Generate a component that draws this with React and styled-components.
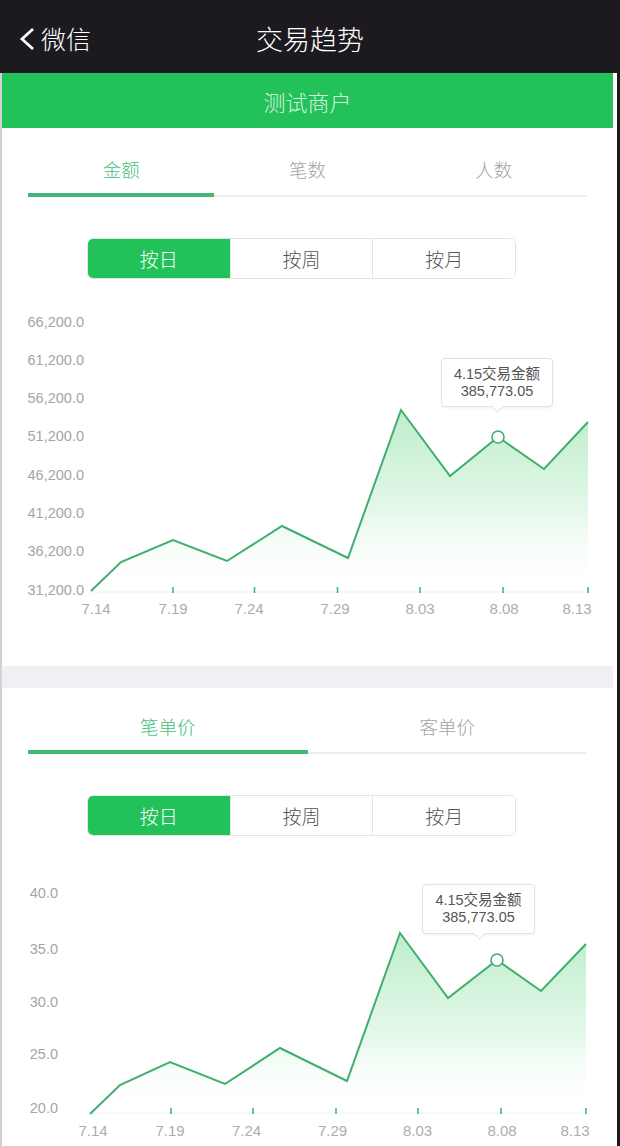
import React from "react";
import styled, { createGlobalStyle } from "styled-components";

const GREEN = "#22c15a";
const LINE = "#3fae6e";

const amountChart = {
	top: 279,
	height: 387,
	yLabels: [
		["66,200.0", 323],
		["61,200.0", 361],
		["56,200.0", 399],
		["51,200.0", 437],
		["46,200.0", 476],
		["41,200.0", 514],
		["36,200.0", 552],
		["31,200.0", 591],
	],
	yLabelX: 84,
	xLabels: [
		["7.14", 96],
		["7.19", 173],
		["7.24", 249],
		["7.29", 335],
		["8.03", 420],
		["8.08", 504],
		["8.13", 577],
	],
	xLabelY: 610,
	ticks: [173, 254.5, 337.5, 420, 503, 588],
	base: 592,
	points: [
		[91, 591],
		[121, 562],
		[173, 540],
		[227, 561],
		[282, 526],
		[348, 558],
		[401, 410],
		[450, 476],
		[498, 437],
		[544, 469],
		[588, 422],
	],
	marker: [498, 437],
	tip: { left: 439, top: 79, width: 112, height: 49 },
};

const priceChart = {
	top: 835,
	height: 320,
	yLabels: [
		["40.0", 893],
		["35.0", 949],
		["30.0", 1002],
		["25.0", 1054],
		["20.0", 1108],
	],
	yLabelX: 58,
	xLabels: [
		["7.14", 93],
		["7.19", 170],
		["7.24", 246.5],
		["7.29", 332.5],
		["8.03", 417.5],
		["8.08", 502],
		["8.13", 575],
	],
	xLabelY: 1131,
	ticks: [171, 253, 336, 418, 501, 586],
	base: 1112,
	points: [
		[90, 1113],
		[120, 1084],
		[170, 1061],
		[225, 1083],
		[280, 1047],
		[347, 1080],
		[400, 932],
		[448, 997],
		[497, 959],
		[541, 990],
		[586, 943],
	],
	marker: [497, 959],
	tip: { left: 420, top: 48, width: 113, height: 50 },
};

function Tabs({ items, active, padTop, padBottom }) {
	return (
		<TabBar>
			{items.map((t, i) => (
				<Tab key={t} $active={i === active} $padTop={padTop} $padBottom={padBottom}>
					{t}
				</Tab>
			))}
		</TabBar>
	);
}

function Segmented() {
	const items = ["按日", "按周", "按月"];
	return (
		<SegWrap>
			<SegGroup>
				{items.map((t, i) => (
					<Segment key={t} $active={i === 0}>
						{t}
					</Segment>
				))}
			</SegGroup>
		</SegWrap>
	);
}

function TrendChart({ data, id }) {
	const line = data.points.map((p) => p.join(",")).join(" ");
	const first = data.points[0];
	const last = data.points[data.points.length - 1];
	const area = `M${first[0]},${data.base} L${line.replace(/ /g, " L")} L${last[0]},${data.base} Z`;

	return (
		<ChartBox $height={data.height}>
			<svg
				width="611"
				height={data.height}
				viewBox={`2 ${data.top} 611 ${data.height}`}
			>
				<defs>
					<linearGradient id={id} x1="0" y1="0" x2="0" y2="1">
						<stop offset="0" stopColor="#b9ecc8" stopOpacity="0.95" />
						<stop offset="0.55" stopColor="#dcf6e3" stopOpacity="0.8" />
						<stop offset="1" stopColor="#ffffff" stopOpacity="0" />
					</linearGradient>
				</defs>
				{data.yLabels.map(([t, y]) => (
					<AxisText key={t} x={data.yLabelX} y={y} textAnchor="end" dominantBaseline="middle">
						{t}
					</AxisText>
				))}
				<line x1={first[0]} y1={data.base} x2={last[0]} y2={data.base} stroke="#eaf4ee" strokeWidth="1" />
				<path d={area} fill={`url(#${id})`} />
				{data.ticks.map((x) => (
					<line key={x} x1={x} y1={data.base - 5} x2={x} y2={data.base + 1} stroke={LINE} strokeWidth="1.5" />
				))}
				<polyline points={line} fill="none" stroke={LINE} strokeWidth="2" strokeLinejoin="miter" />
				<circle cx={data.marker[0]} cy={data.marker[1]} r="6" fill="#fff" stroke={LINE} strokeWidth="1.6" />
				{data.xLabels.map(([t, x]) => (
					<XText key={t} x={x} y={data.xLabelY} textAnchor="middle" dominantBaseline="middle">
						{t}
					</XText>
				))}
			</svg>
			<Tooltip $left={data.tip.left} $top={data.tip.top} $width={data.tip.width} $height={data.tip.height}>
				<div>4.15交易金额</div>
				<div>385,773.05</div>
			</Tooltip>
		</ChartBox>
	);
}

export default function App() {
	return (
		<>
			<GlobalStyle />
			<Page>
				<Header>
					<Back>
						<svg width="18" height="24" viewBox="0 0 18 24">
							<polyline points="15,2 4,12 15,22" fill="none" stroke="#fff" strokeWidth="2.8" />
						</svg>
						<span>微信</span>
					</Back>
					<Title>交易趋势</Title>
					<span />
				</Header>
				<Body>
					<Merchant>测试商户</Merchant>
					<Tabs items={["金额", "笔数", "人数"]} active={0} padTop={29} padBottom={14} />
					<Segmented />
					<TrendChart data={amountChart} id="g1" />
					<Divider />
					<Tabs items={["笔单价", "客单价"]} active={0} padTop={26} padBottom={14} />
					<Segmented />
					<TrendChart data={priceChart} id="g2" />
				</Body>
			</Page>
		</>
	);
}

// Styled Components

const GlobalStyle = createGlobalStyle`
	html, body {
		margin: 0;
		padding: 0;
		background: #1c1b20;
		overflow: hidden;
	}
	body {
		font-family: "Liberation Sans", "Noto Sans CJK SC", sans-serif;
	}
`;

const Page = styled.div`
	width: 620px;
	height: 1146px;
	overflow: hidden;
	background: #1c1a1f;
`;

const Header = styled.div`
	height: 73px;
	display: grid;
	grid-template-columns: 1fr auto 1fr;
	align-items: center;
	padding-top: 3px;
	box-sizing: border-box;
	color: #fff;
	font-family: "Noto Sans CJK SC", sans-serif;
	font-weight: 300;
`;

const Back = styled.div`
	display: flex;
	align-items: center;
	gap: 5px;
	padding-left: 18px;
	font-size: 25px;
	svg {
		margin-top: 1px;
	}
`;

const Title = styled.div`
	font-size: 27px;
`;

const Body = styled.div`
	margin-right: 3px;
	background: #fff;
	border-left: 2px solid #d2d2d2;
	padding-right: 4px;
	height: 1073px;
	overflow: hidden;
`;

const Merchant = styled.div`
	height: 55px;
	background: ${GREEN};
	color: #d2f3da;
	font-family: "Noto Sans CJK SC", sans-serif;
	font-weight: 300;
	font-size: 22px;
	display: flex;
	align-items: center;
	justify-content: center;
`;

const TabBar = styled.div`
	display: flex;
	margin: 0 26px;
	border-bottom: 2px solid #ededed;
`;

const Tab = styled.div`
	flex: 1;
	position: relative;
	text-align: center;
	font-family: "Noto Sans CJK SC", sans-serif;
	font-weight: 300;
	font-size: 18.5px;
	line-height: 24px;
	padding-top: ${(p) => p.$padTop}px;
	padding-bottom: ${(p) => p.$padBottom}px;
	color: ${(p) => (p.$active ? "#45bd7a" : "#a3a3a3")};

	&::after {
		content: "";
		display: ${(p) => (p.$active ? "block" : "none")};
		position: absolute;
		left: 0;
		right: 0;
		bottom: -2px;
		height: 4px;
		background: #44b878;
	}
`;

const SegWrap = styled.div`
	padding: 41px 0 0 85px;
`;

const SegGroup = styled.div`
	display: flex;
	width: 429px;
	height: 41px;
	box-sizing: border-box;
	border: 1px solid #e3e3e3;
	border-radius: 6px;
	overflow: hidden;
`;

const Segment = styled.div`
	flex: 1;
	display: flex;
	align-items: center;
	justify-content: center;
	font-family: "Noto Sans CJK SC", sans-serif;
	font-weight: 300;
	font-size: 19px;
	background: ${(p) => (p.$active ? GREEN : "#fff")};
	color: ${(p) => (p.$active ? "#fff" : "#555")};
	& + & {
		border-left: 1px solid #e6e6e6;
	}
`;

const ChartBox = styled.div`
	position: relative;
	height: ${(p) => p.$height}px;
	svg {
		display: block;
	}
`;

const AxisText = styled.text`
	font-family: "Liberation Sans", sans-serif;
	font-size: 14.5px;
	fill: #a5a5a5;
`;

const XText = styled.text`
	font-family: "Liberation Sans", sans-serif;
	font-size: 15px;
	fill: #adadad;
`;

const Tooltip = styled.div`
	position: absolute;
	left: ${(p) => p.$left}px;
	top: ${(p) => p.$top}px;
	width: ${(p) => p.$width}px;
	height: ${(p) => p.$height}px;
	box-sizing: border-box;
	background: #fff;
	border: 1px solid #e2e2e2;
	border-radius: 4px;
	box-shadow: 0 1px 3px rgba(0, 0, 0, 0.06);
	display: flex;
	flex-direction: column;
	align-items: center;
	justify-content: center;
	font-family: "Liberation Sans", "Noto Sans CJK SC", sans-serif;
	font-size: 14.5px;
	line-height: 17px;
	color: #555;

	&::after {
		content: "";
		position: absolute;
		left: 50%;
		bottom: -5px;
		width: 8px;
		height: 8px;
		margin-left: -4px;
		background: #fff;
		border-right: 1px solid #e2e2e2;
		border-bottom: 1px solid #e2e2e2;
		transform: rotate(45deg);
	}
`;

const Divider = styled.div`
	height: 22px;
	background: #efeff4;
`;
